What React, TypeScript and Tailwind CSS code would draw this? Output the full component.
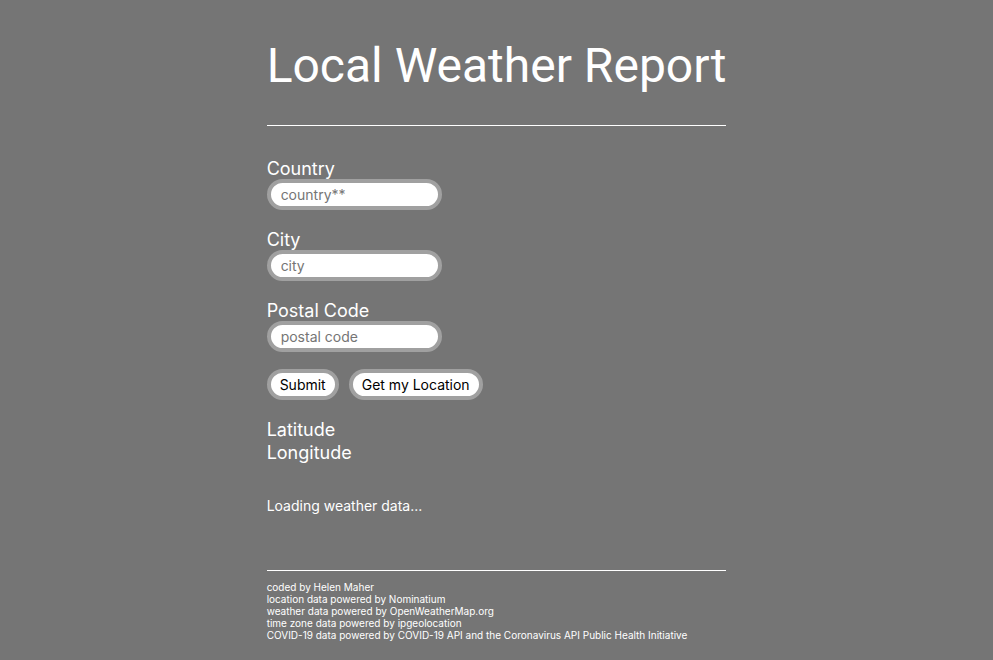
import React from "react";

const fields = [
  { id: "country", label: "Country", placeholder: "country**" },
  { id: "city", label: "City", placeholder: "city" },
  { id: "postal", label: "Postal Code", placeholder: "postal code" },
];

const credits = [
  "coded by Helen Maher",
  "location data powered by Nominatium",
  "weather data powered by OpenWeatherMap.org",
  "time zone data powered by ipgeolocation",
  "COVID-19 data powered by COVID-19 API and the Coronavirus API Public Health Initiative",
];

const pill = "h-[31px] rounded-full border-4 border-[#a0a0a0] bg-white text-sm leading-5";

export default function App() {
  return (
    <div className="flex min-h-screen justify-center bg-[#757575] font-['Inter',sans-serif] text-white">
      <main className="w-fit pt-9 pb-5">
        <h1 className="font-['Roboto',sans-serif] text-5xl leading-[60px] whitespace-nowrap">
          Local Weather Report
        </h1>
        <hr className="mt-[29px] border-t border-white" />
        <form className="mt-[33px]" onSubmit={(e) => e.preventDefault()}>
          <div className="flex flex-col gap-5">
            {fields.map((f) => (
              <div key={f.id}>
                <label htmlFor={f.id} className="block text-lg leading-5">
                  {f.label}
                </label>
                <input
                  id={f.id}
                  type="text"
                  placeholder={f.placeholder}
                  className={`${pill} block w-[175px] px-[10px] text-black outline-none placeholder:text-[#757575]`}
                />
              </div>
            ))}
          </div>
          <div className="mt-[17px] flex gap-[10px]">
            <button type="submit" className={`${pill} px-[9px] text-black`}>
              Submit
            </button>
            <button type="button" className={`${pill} px-[9px] text-black`}>
              Get my Location
            </button>
          </div>
        </form>
        <div className="mt-[18px] text-lg leading-[23px]">
          <p>Latitude</p>
          <p>Longitude</p>
        </div>
        <p className="mt-8 text-sm leading-5">Loading weather data...</p>
        <hr className="mt-[54px] border-t border-white" />
        <footer className="mt-[10px] w-0 text-[10px] leading-3 whitespace-nowrap">
          {credits.map((c) => (
            <p key={c}>{c}</p>
          ))}
        </footer>
      </main>
    </div>
  );
}
